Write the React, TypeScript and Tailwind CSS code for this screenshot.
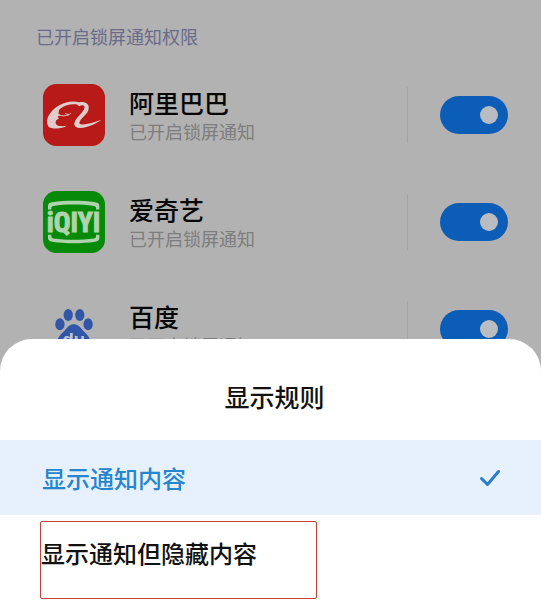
import { useState } from 'react';
import type { ReactNode } from 'react';

function AlibabaIcon() {
  return (
    <svg viewBox="40 40 187 187" className="size-[62px] shrink-0" aria-hidden="true">
      <rect x="40" y="40" width="187" height="187" rx="40" fill="#b81a17" />
      <path
        d="M56 168C44 148 62 119 88 105C107 94 130 90 149 95C166 91 180 99 178 114C176 130 158 140 151 153C147 160 152 163 161 162C179 161 199 154 216 148C204 158 177 171 153 173C138 173 131 165 136 154C142 139 163 125 165 112C166 103 158 103 149 107L143 102C127 99 108 103 94 113C84 120 90 124 86 130L93 134L84 138L88 144L80 149C75 157 79 166 94 167C99 168 106 167 111 166C102 175 65 178 56 168Z"
        fill="#dfcccb"
      />
      <path d="M88 133C99 138 113 137 123 129M108 129L117 133" fill="none" stroke="#dfcccb" strokeWidth="3" strokeLinecap="round" />
    </svg>
  );
}

function IqiyiIcon() {
  return (
    <svg viewBox="40 30 187 187" className="size-[62px] shrink-0" aria-hidden="true">
      <rect x="40" y="30" width="187" height="187" rx="40" fill="#078a07" />
      <path
        d="M55 86V76C55 68 60 65 67 64C110 58 155 58 198 64C205 65 210 68 210 76V86H200V82C200 77 198 76 194 75C155 69 110 69 71 75C67 76 65 77 65 82V86Z"
        fill="#b0d3af"
      />
      <path
        d="M55 162V171C55 179 60 182 67 183C110 189 155 189 198 183C205 182 210 179 210 171V162H200V166C200 171 198 172 194 173C155 178 110 178 71 173C67 172 65 171 65 166V162Z"
        fill="#b0d3af"
      />
      <text
        x="132"
        y="153"
        textAnchor="middle"
        fill="#b0d3af"
        stroke="#b0d3af"
        strokeWidth="3"
        className="font-['Liberation_Sans_Narrow','Roboto_Condensed','Liberation_Sans',sans-serif] text-[84px] font-bold"
      >
        iQIYI
      </text>
    </svg>
  );
}

function BaiduIcon() {
  return (
    <svg viewBox="40 22 187 187" className="size-[62px] shrink-0" aria-hidden="true">
      <g fill="#3156a8">
        <ellipse cx="91" cy="101" rx="14" ry="18" />
        <ellipse cx="116" cy="73" rx="14" ry="18" />
        <ellipse cx="151" cy="73" rx="14" ry="18" />
        <ellipse cx="176" cy="101" rx="14" ry="18" />
        <path d="M133 101C145 101 152 109 158 117C166 127 182 137 182 153C182 172 167 178 151 176C139 174 128 174 116 176C99 178 84 172 84 153C84 137 100 127 108 117C114 109 121 101 133 101Z" />
      </g>
      <text x="133" y="168" textAnchor="middle" fill="#bfc4cf" className="font-['Liberation_Sans',sans-serif] text-[56px] font-bold">
        du
      </text>
    </svg>
  );
}

interface AppRowProps {
  id: string;
  name: string;
  icon: ReactNode;
}

function AppRow({ id, name, icon }: AppRowProps) {
  const [enabled, setEnabled] = useState(true);

  return (
    <li className="flex h-[107px] items-center pr-[33px] pl-[43px]">
      {icon}
      <label htmlFor={id} className="ml-6 flex-1">
        <span className="block text-[25px] leading-8 font-medium text-[#060606]">{name}</span>
        <span className="block text-[18px] leading-[26px] text-[#7d7d7d]">已开启锁屏通知</span>
      </label>
      <div className="mr-8 h-14 w-px bg-[#a5a5a5]" />
      <input
        id={id}
        type="checkbox"
        role="switch"
        checked={enabled}
        onChange={() => setEnabled(!enabled)}
        className="flex h-[38px] w-[68px] shrink-0 cursor-pointer appearance-none items-center rounded-full bg-[#8f8f8f] px-[10px] before:size-[18px] before:rounded-full before:bg-[#b9bcc0] checked:justify-end checked:bg-[#0c5db7]"
      />
    </li>
  );
}

const apps = [
  { id: 'alibaba', name: '阿里巴巴', icon: <AlibabaIcon /> },
  { id: 'iqiyi', name: '爱奇艺', icon: <IqiyiIcon /> },
  { id: 'baidu', name: '百度', icon: <BaiduIcon /> }
];

export default function App() {
  return (
    <div className="relative h-screen overflow-hidden bg-[#b2b2b2] font-['Noto_Sans_CJK_SC',sans-serif]">
      <main>
        <h2 className="px-9 pt-[23px] pb-3 text-[18px] leading-[26px] text-[#6a6b8b]">已开启锁屏通知权限</h2>
        <ul>
          {apps.map((app) => (
            <AppRow key={app.id} id={app.id} name={app.name} icon={app.icon} />
          ))}
        </ul>
      </main>

      {/* Bottom sheet */}
      <section
        role="dialog"
        aria-labelledby="sheet-title"
        className="absolute inset-x-0 bottom-0 rounded-t-[32px] bg-white"
      >
        <h1 id="sheet-title" className="pt-[39px] pb-[26px] pl-2 text-center text-[25px] leading-9 font-medium text-[#111111]">
          显示规则
        </h1>
        <button
          type="button"
          className="flex w-full cursor-pointer items-center justify-between bg-[#e6f1fd] pt-5 pb-[19px] pr-10 pl-[42px] text-left text-[24px] leading-9 font-medium text-[#2585cf]"
        >
          显示通知内容
          <svg viewBox="0 0 22 18" className="h-[18px] w-[22px]" fill="none" aria-hidden="true">
            <path d="M2.5 9.5L8.5 15.5L19.5 2.5" stroke="#2a7bc9" strokeWidth="3" strokeLinecap="round" strokeLinejoin="round" />
          </svg>
        </button>
        <div className="px-10 pt-1.5 pb-px">
          <button
            type="button"
            className="w-3/5 cursor-pointer rounded-xs border border-[#c0403c] pt-[13px] pb-[27px] text-left text-[24px] leading-9 font-medium whitespace-nowrap text-[#111111]"
          >
            显示通知但隐藏内容
          </button>
        </div>
      </section>
    </div>
  );
}
